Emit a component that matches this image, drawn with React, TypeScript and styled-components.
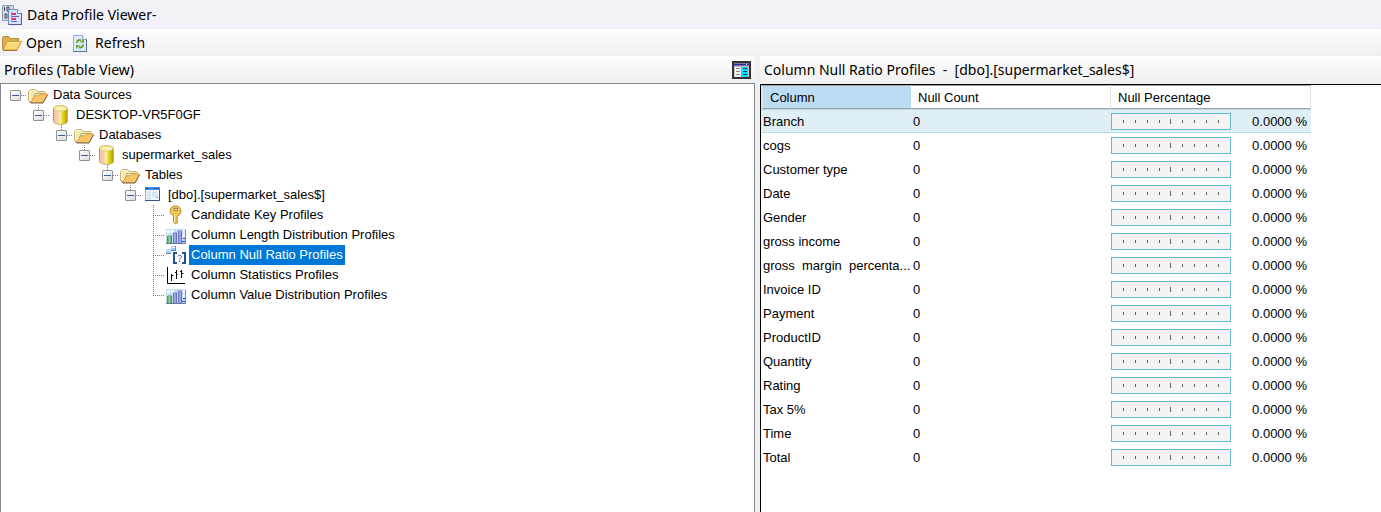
import React, { useState } from "react";
import styled, { createGlobalStyle, css } from "styled-components";

const GlobalStyle = createGlobalStyle`
  html, body, #root { height: 100%; }
  body {
    margin: 0;
    background: #f0f0f0;
    color: #000;
    font: 13px/20px "Liberation Sans", Arial, sans-serif;
    overflow: hidden;
  }
  *, *::before, *::after { box-sizing: border-box; }
`;

const uiFont = css`
  font-family: "Segoe UI", "Noto Sans", sans-serif;
  font-size: 14px;
  line-height: 20px;
`;

const barGradient = "linear-gradient(#fdfdfd, #f0f0f0)";

const Window = styled.div`
  display: flex;
  flex-direction: column;
  min-height: 100%;
`;

const TitleBar = styled.header`
  ${uiFont}
  display: flex;
  align-items: center;
  gap: 5px;
  height: 29px;
  padding: 0 2px;
  background: #f2f1f7;
`;

const Title = styled.h1`
  margin: 0;
  font: inherit;
`;

const Toolbar = styled.div`
  display: flex;
  align-items: center;
  gap: 10px;
  height: 27px;
  padding: 0 2px;
  background: ${barGradient};
`;

const ToolButton = styled.button`
  ${uiFont}
  display: flex;
  align-items: center;
  gap: 4px;
  padding: 0;
  border: 0;
  background: none;
  color: inherit;
`;

const Panes = styled.div`
  display: grid;
  grid-template-columns: 755fr 621fr;
  column-gap: 5px;
  flex: 1;
`;

const Pane = styled.section`
  display: flex;
  flex-direction: column;
  min-width: 0;
`;

const PaneHeader = styled.div<{ $tall?: boolean }>`
  ${uiFont}
  display: flex;
  align-items: center;
  justify-content: space-between;
  height: ${(p) => (p.$tall ? 28 : 27)}px;
  padding: 0 4px;
  background: ${barGradient};
`;

const PaneTitle = styled.h2`
  margin: 0;
  font: inherit;
  white-space: pre;
`;

const IconButton = styled.button`
  display: flex;
  padding: 0;
  border: 0;
  background: none;
`;

const TreePanel = styled.div`
  flex: 1;
  padding-top: 1px;
  border: solid #828790;
  border-width: 1px 1px 0 1px;
  background: #fff;
`;

const Tree = styled.ul`
  margin: 0;
  padding: 0;
  list-style: none;
`;

const Branch = styled(Tree)`
  padding-left: 23px;
`;

const NodeRow = styled.div`
  display: flex;
  align-items: center;
  height: 20px;
`;

type Line = "none" | "half" | "full";

const Joint = styled.span<{ $line: Line }>`
  display: flex;
  align-items: center;
  width: 27px;
  height: 20px;
  padding-left: 9px;
  background-image:
    repeating-linear-gradient(to right, #808080 0 1px, transparent 1px 2px),
    repeating-linear-gradient(to bottom, #808080 0 1px, transparent 1px 2px);
  background-repeat: no-repeat;
  background-position: 14px 10px, 14px 0;
  background-size: 12px 1px,
    1px ${(p) => ({ none: "0", half: "10px", full: "20px" })[p.$line]};
`;

const Expander = styled.button`
  display: flex;
  align-items: center;
  justify-content: center;
  width: 11px;
  height: 11px;
  padding: 0;
  border: 1px solid #919191;
  border-radius: 1px;
  background: linear-gradient(135deg, #fff, #dcdcdc);
  &::before {
    content: "";
    width: 7px;
    height: 1px;
    background: #3a5bb0;
  }
`;

const IconSlot = styled.span`
  display: flex;
  width: 23px;
  height: 20px;
`;

const NodeLabel = styled.span<{ $selected?: boolean }>`
  padding: 0 2px;
  white-space: nowrap;
  ${(p) => p.$selected && "background: #0078d7; color: #fff;"}
`;

const GridPanel = styled.div`
  flex: 1;
  border: solid #000;
  border-width: 1px 0 0 1px;
  background: #fff;
`;

const Grid = styled.table`
  width: 550px;
  border-collapse: separate;
  border-spacing: 0;
  table-layout: fixed;
`;

const HeadCell = styled.th<{ $sorted?: boolean }>`
  height: 24px;
  padding: 2px 7px 0;
  border: solid;
  border-width: 1px 1px 1px 0;
  border-color: #a0a0a0 #e2e2e2 #a0a0a0 #e2e2e2;
  font-weight: 400;
  text-align: left;
  ${(p) =>
    p.$sorted &&
    css`
      border-left-width: 2px;
      border-right-color: #bcdcf4;
      background: #bcdcf4;
      background-clip: padding-box;
    `}
`;

const BodyRow = styled.tr<{ $current?: boolean }>`
  ${(p) =>
    p.$current &&
    css`
      background: #e0eff5;
      & > td {
        border-color: #b9dce8;
      }
    `}
`;

const Cell = styled.td`
  height: 24px;
  padding: 2px 2px 0;
  border: solid transparent;
  border-width: 1px 0;
  white-space: pre;
`;

const RatioCell = styled(Cell)`
  padding: 0 4px 0 0;
`;

const Ratio = styled.div`
  display: flex;
  align-items: center;
  justify-content: space-between;
`;

const Percent = styled.span`
  padding-top: 2px;
`;

const Gauge = styled.div`
  display: flex;
  align-items: center;
  justify-content: space-evenly;
  width: 120px;
  height: 17px;
  border: 1px solid #66b7d0;
  background: #f3f3f3;
`;

const Tick = styled.i<{ $major?: boolean }>`
  width: 1px;
  height: ${(p) => (p.$major ? 5 : 3)}px;
  background: #606060;
`;

const AppIcon = () => (
  <svg width="20" height="20" viewBox="0 0 20 20" aria-hidden="true">
    <path d="M.5.500h11v15H.5z" fill="#d5dbe4" stroke="#8f9cb0" />
    <path d="M2.500 2v4M5 2h2v4H5zM3 9h2v4H3z" stroke="#3c4656" fill="none" />
    <path d="M6.500 4.500h9l4 4v11h-13z" fill="#d3e3fa" stroke="#6f8db8" />
    <path d="M15.500 4.500v4h4" fill="#fff" stroke="#6f8db8" />
    <path d="M9.500 7v10" stroke="#8ba0c8" fill="none" />
    <path d="M10 9h4M10 14h4" stroke="#d6336c" strokeWidth="2" />
    <path d="M10 11.500h7M10 16.500h5" stroke="#7a5cc0" />
    <path d="M6.500 19.500h13v-11" stroke="#47618c" fill="none" />
  </svg>
);

const OpenIcon = () => (
  <svg width="20" height="20" viewBox="0 0 20 20" aria-hidden="true">
    <path d="M.5 16.500V4.500l1-1h5l2 2h8v3" fill="#e0ad48" stroke="#b48a3c" />
    <path d="M1 17L5 8.500h14.500L15 17z" fill="#fbd874" stroke="#c6973c" />
    <path d="M5.500 9.500h12.500" stroke="#fff2ba" />
    <path d="M1 17.500h14" stroke="#a07a34" />
  </svg>
);

const RefreshIcon = () => (
  <svg width="19" height="20" viewBox="0 0 19 20" aria-hidden="true">
    <path d="M1.500 2.500h9l4 4v12h-13z" fill="#dfe9f8" stroke="#9aabc6" />
    <path d="M10.500 2.500v4h4" fill="#fff" stroke="#8fa1bf" />
    <path d="M1.500 18.500h13v-12" stroke="#5a6f90" fill="none" />
    <path d="M5 10c0-2.500 2-3.500 4-2.500" stroke="#6aa52f" strokeWidth="2" fill="none" />
    <path d="M8 9.500h4v-4z" fill="#6aa52f" />
    <path d="M11 11.500c0 2.500-2 3.500-4 2.500" stroke="#6aa52f" strokeWidth="2" fill="none" />
    <path d="M8 12H4v4z" fill="#6aa52f" />
  </svg>
);

const ViewIcon = () => (
  <svg width="19" height="18" viewBox="0 0 19 18" aria-hidden="true">
    <path d="M1 1h17v16H1z" fill="#c8c8c8" stroke="#333" strokeWidth="2" />
    <path d="M2 3.500h15" stroke="#2a2a9c" strokeWidth="2" />
    <path d="M2 5.500h15" stroke="#b4b4b4" />
    <path d="M14 3.500h1" stroke="#e8e8f4" />
    <path d="M3 6h6v10H3z" fill="#f4f4f4" />
    <path d="M9 6h7v10H9z" fill="#00e5f2" />
    <path d="M4 7.500h4M4 10.500h4M4 13.500h4" stroke="#8a8a8a" />
    <path d="M11 7.500h4M11 10.500h4M11 13.500h4" stroke="#123a9a" />
  </svg>
);

const FolderIcon = () => (
  <svg width="20" height="20" viewBox="0 0 20 20" aria-hidden="true">
    <path d="M.5 15.500v-9l2-2h5l2 2h7l1 1v4" fill="#f6e9ae" stroke="#c6b477" />
    <path d="M4.500 17L7 8.500h9L14 17z" fill="#f0f3cc" stroke="#a9ad78" />
    <path d="M2.500 17.500l4-6.500 4.500-.5 1.500-1.500h7l-4.500 8.500z" fill="#fcc468" stroke="#dba145" />
    <path d="M1 15.500l2 2.500h12l4.500-8" stroke="#75664a" fill="none" />
    <path d="M1.500 14V6.500l1.500-1h4" stroke="#fffbe0" fill="none" />
  </svg>
);

const DatabaseIcon = () => (
  <svg width="20" height="20" viewBox="0 0 20 20" aria-hidden="true">
    <defs>
      <linearGradient id="drum">
        <stop offset="0" stopColor="#f5c0a0" />
        <stop offset=".35" stopColor="#fbcfae" />
        <stop offset=".45" stopColor="#fbf5c0" />
        <stop offset=".6" stopColor="#eadf3c" />
        <stop offset=".85" stopColor="#cdb800" />
        <stop offset="1" stopColor="#a89400" />
      </linearGradient>
    </defs>
    <path d="M2.500 3.500C2.500-.3 16.500-.3 16.500 3.500v13c0 3.800-14 3.800-14 0z" fill="url(#drum)" stroke="#c9b560" />
    <ellipse cx="9.500" cy="3.500" rx="6.500" ry="2.500" fill="#fbf3b4" stroke="#e0cf78" />
    <path d="M2.500 4v12.500" stroke="#8a8074" strokeDasharray="1 1" />
  </svg>
);

const TableIcon = () => (
  <svg width="20" height="20" viewBox="0 0 20 20" aria-hidden="true">
    <path d="M2.500 2.500h14v13h-14z" fill="#f2f8ff" stroke="#7fb0e4" />
    <path d="M2 3.500h15" stroke="#3b8cec" strokeWidth="3" />
    <path d="M3 3.500h2M11 3.500h1M13 3.500h1M15 3.500h1" stroke="#10357a" />
    <path d="M4 7.500h4M9 7.500h5M4 10.500h4M9 10.500h5M4 13.500h4" stroke="#c8dbf0" strokeWidth="2" />
    <path d="M13 12.500h2" stroke="#6aa0e0" />
    <path d="M2 15.500h14.500V5" stroke="#34587e" fill="none" />
  </svg>
);

const KeyIcon = () => (
  <svg width="20" height="20" viewBox="0 0 20 20" aria-hidden="true">
    <path
      d="M9.500 1C6 1 4 3 4 6c0 2.200 1.500 3.800 3.500 4.500V17l2 2 2-1.500v-1.500l-1-1 1-1v-1.500l-1-1 1-.5c2-.8 3.500-2.500 3.500-5C15 3 13 1 9.500 1z"
      fill="#efc752"
      stroke="#b08d42"
    />
    <path d="M8 3.500h3.500v2H8z" fill="#fff" stroke="#9a7c38" />
    <path d="M8.500 10v7" stroke="#fff0a6" />
  </svg>
);

const DistributionIcon = () => (
  <svg width="20" height="20" viewBox="0 0 20 20" aria-hidden="true">
    <defs>
      <linearGradient id="greenBar">
        <stop offset="0" stopColor="#2e8b4a" />
        <stop offset=".5" stopColor="#8fdc8f" />
        <stop offset="1" stopColor="#2f7d52" />
      </linearGradient>
      <linearGradient id="blueBar">
        <stop offset="0" stopColor="#5464b4" />
        <stop offset=".5" stopColor="#b3bdf0" />
        <stop offset="1" stopColor="#4a5cb0" />
      </linearGradient>
    </defs>
    <path d="M0 4h20v15H0z" fill="#c9daf6" />
    <path d="M1 5h3v3H1zM5 5h3v3H5zM13 5h3v2h-3zM17 5h2v3h-2zM1 9h2v3H1zM17 9h2v3h-2z" fill="#f6faff" />
    <path d="M1 11l2.500-1.500L6 11v8H1z" fill="url(#greenBar)" />
    <path d="M7 8l2-1.500L11 8v11H7z" fill="url(#blueBar)" />
    <path d="M12 6l2-1.500L16 6v13h-4z" fill="url(#blueBar)" />
    <path d="M17 13h2v1h-2zM16 16h3v1h-3z" fill="#1f54c0" />
    <path d="M0 18.500h20" stroke="#6478a6" />
    <path d="M19.500 5v14" stroke="#7086b8" />
  </svg>
);

const NullIcon = () => (
  <svg width="20" height="20" viewBox="0 0 20 20" aria-hidden="true">
    <path d="M5 1h5v5H5zM0 4h5v5H0z" fill="#a9cdf5" />
    <path d="M5 5.500h5M0 8.500h5M9.500 1v5" stroke="#5a86bc" />
    <path d="M6 2.500h3M1 5.500h3" stroke="#f2f8ff" />
    <path d="M11 8H8v10h3M16 8h3v10h-3" stroke="#23509a" strokeWidth="2" fill="none" />
    <path d="M12 11.500c0-1.500 3.500-1.500 3.500.2 0 1.300-2 1.300-2 2.800M13.500 15.500v1.500" stroke="#3a62a4" fill="none" />
  </svg>
);

const StatisticsIcon = () => (
  <svg width="20" height="20" viewBox="0 0 20 20" aria-hidden="true">
    <path d="M1.500 2v16.500H19" stroke="#000" fill="none" />
    <path d="M5.500 9v7M5.500 10.500h2M10.500 5v9M9 7.500h1.500M10.500 9.500h1M15.500 5v8M15.500 8.500h2M14 6.500h1.500" stroke="#000" fill="none" />
  </svg>
);

type TreeNode = {
  label: string;
  Icon: () => React.JSX.Element;
  children?: TreeNode[];
};

const root: TreeNode = {
  label: "Data Sources",
  Icon: FolderIcon,
  children: [
    {
      label: "DESKTOP-VR5F0GF",
      Icon: DatabaseIcon,
      children: [
        {
          label: "Databases",
          Icon: FolderIcon,
          children: [
            {
              label: "supermarket_sales",
              Icon: DatabaseIcon,
              children: [
                {
                  label: "Tables",
                  Icon: FolderIcon,
                  children: [
                    {
                      label: "[dbo].[supermarket_sales$]",
                      Icon: TableIcon,
                      children: [
                        { label: "Candidate Key Profiles", Icon: KeyIcon },
                        { label: "Column Length Distribution Profiles", Icon: DistributionIcon },
                        { label: "Column Null Ratio Profiles", Icon: NullIcon },
                        { label: "Column Statistics Profiles", Icon: StatisticsIcon },
                        { label: "Column Value Distribution Profiles", Icon: DistributionIcon },
                      ],
                    },
                  ],
                },
              ],
            },
          ],
        },
      ],
    },
  ],
};

type NodeProps = {
  node: TreeNode;
  line: Line;
  selected: string;
  onSelect: (label: string) => void;
};

function Node({ node, line, selected, onSelect }: NodeProps) {
  const [open, setOpen] = useState(true);
  const { label, Icon, children } = node;
  return (
    <li role="treeitem" aria-selected={label === selected} aria-expanded={children ? open : undefined}>
      <NodeRow>
        <Joint $line={line}>
          {children && <Expander aria-label={`Toggle ${label}`} onClick={() => setOpen(!open)} />}
        </Joint>
        <IconSlot>
          <Icon />
        </IconSlot>
        <NodeLabel $selected={label === selected} onClick={() => onSelect(label)}>
          {label}
        </NodeLabel>
      </NodeRow>
      {children && open && (
        <Branch role="group">
          {children.map((child, i) => (
            <Node
              key={child.label}
              node={child}
              line={i === children.length - 1 ? "half" : "full"}
              selected={selected}
              onSelect={onSelect}
            />
          ))}
        </Branch>
      )}
    </li>
  );
}

const columns = [
  "Branch",
  "cogs",
  "Customer type",
  "Date",
  "Gender",
  "gross income",
  "gross  margin  percenta...",
  "Invoice ID",
  "Payment",
  "ProductID",
  "Quantity",
  "Rating",
  "Tax 5%",
  "Time",
  "Total",
];

const ticks = [1, 2, 3, 4, 5, 6, 7, 8, 9];

export default function App() {
  const [selected, setSelected] = useState("Column Null Ratio Profiles");
  return (
    <Window>
      <GlobalStyle />
      <TitleBar>
        <AppIcon />
        <Title>Data Profile Viewer-</Title>
      </TitleBar>
      <Toolbar>
        <ToolButton>
          <OpenIcon />
          Open
        </ToolButton>
        <ToolButton>
          <RefreshIcon />
          Refresh
        </ToolButton>
      </Toolbar>
      <Panes>
        <Pane>
          <PaneHeader>
            <PaneTitle>Profiles (Table View)</PaneTitle>
            <IconButton aria-label="Switch view">
              <ViewIcon />
            </IconButton>
          </PaneHeader>
          <TreePanel>
            <Tree role="tree">
              <Node node={root} line="none" selected={selected} onSelect={setSelected} />
            </Tree>
          </TreePanel>
        </Pane>
        <Pane>
          <PaneHeader $tall>
            <PaneTitle>{"Column Null Ratio Profiles  -  [dbo].[supermarket_sales$]"}</PaneTitle>
          </PaneHeader>
          <GridPanel>
            <Grid>
              <colgroup>
                <col style={{ width: 150 }} />
                <col style={{ width: 200 }} />
                <col style={{ width: 200 }} />
              </colgroup>
              <thead>
                <tr>
                  <HeadCell $sorted>Column</HeadCell>
                  <HeadCell>Null Count</HeadCell>
                  <HeadCell>Null Percentage</HeadCell>
                </tr>
              </thead>
              <tbody>
                {columns.map((name, i) => (
                  <BodyRow key={name} $current={i === 0}>
                    <Cell>{name}</Cell>
                    <Cell>0</Cell>
                    <RatioCell>
                      <Ratio>
                        <Gauge>
                          {ticks.map((t) => (
                            <Tick key={t} $major={t === 5} />
                          ))}
                        </Gauge>
                        <Percent>0.0000 %</Percent>
                      </Ratio>
                    </RatioCell>
                  </BodyRow>
                ))}
              </tbody>
            </Grid>
          </GridPanel>
        </Pane>
      </Panes>
    </Window>
  );
}
